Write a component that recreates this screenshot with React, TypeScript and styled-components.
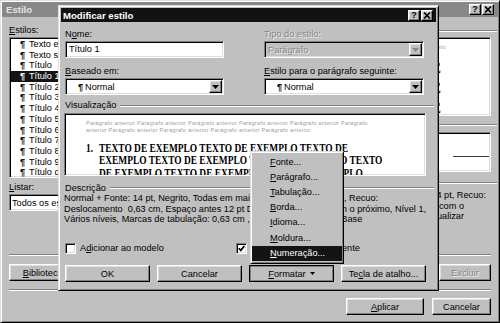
import React from "react";
import styled, { createGlobalStyle, css } from "styled-components";

const FACE = "#c0c0c0";
const SHADOW = "#808080";
const LIGHT = "#dfdfdf";

const GlobalStyle = createGlobalStyle`
  * { box-sizing: border-box; }
  html, body { margin: 0; padding: 0; }
  body {
    width: 500px;
    height: 323px;
    overflow: hidden;
    background: ${FACE};
    font-family: "Liberation Sans", Arial, sans-serif;
    font-size: 9.2px;
    color: #000;
  }
`;

const raised = css`
  border: 1px solid;
  border-color: #fff #000 #000 #fff;
  box-shadow: inset -1px -1px ${SHADOW}, inset 1px 1px ${LIGHT};
`;

const sunken = css`
  border: 1px solid;
  border-color: ${SHADOW} #fff #fff ${SHADOW};
  box-shadow: inset 1px 1px #000, inset -1px -1px ${LIGHT};
`;

const frame = css`
  border: 1px solid;
  border-color: ${LIGHT} #000 #000 ${LIGHT};
  box-shadow: inset 1px 1px #fff, inset -1px -1px ${SHADOW};
`;

const disabledText = css`
  color: #868686;
  text-shadow: 1px 1px #efefef;
`;

/* ---------- window chrome ---------- */

const Window = styled.div`
  position: relative;
  width: 500px;
  height: 323px;
  background: ${FACE};
  ${frame}
  padding: 1px;
  display: flex;
  flex-direction: column;
`;

const TitleBar = styled.div<{ $active?: boolean; $padR: number }>`
  flex: none;
  height: ${(p) => (p.$active ? 14 : 15)}px;
  display: flex;
  align-items: center;
  padding: 0 ${(p) => p.$padR}px 0 ${(p) => (p.$active ? 2 : 4)}px;
  background: ${(p) => (p.$active ? "#121212" : "#888888")};
  color: ${(p) => (p.$active ? "#fff" : "#e4e4e4")};
`;

const TitleText = styled.span`
  flex: 1;
  font-weight: bold;
  font-size: 9.6px;
  white-space: nowrap;
`;

const TitleButtons = styled.div`
  display: flex;
  gap: 1px;
`;

const TitleButton = styled.div`
  ${raised}
  width: 12px;
  height: 11px;
  display: flex;
  align-items: center;
  justify-content: center;
  background: ${FACE};
  color: #000;
  font-weight: bold;
  font-size: 9px;
  line-height: 1;
`;

const Acc = styled.span`
  text-decoration: underline;
  text-underline-offset: 1px;
`;

/* ---------- shared controls ---------- */

const Label = styled.div<{ $disabled?: boolean; $h?: number }>`
  height: ${(p) => p.$h ?? 11}px;
  line-height: ${(p) => p.$h ?? 11}px;
  white-space: nowrap;
  ${(p) => p.$disabled && disabledText}
`;

const TextField = styled.div`
  ${sunken}
  height: 17px;
  margin-top: 1px;
  background: #fff;
  padding-left: 3px;
  line-height: 15px;
  white-space: nowrap;
`;

const Combo = styled.div<{ $disabled?: boolean }>`
  ${sunken}
  height: 17px;
  margin-top: 1px;
  padding: 1px;
  display: flex;
  align-items: center;
  background: ${(p) => (p.$disabled ? FACE : "#fff")};
  overflow: hidden;
`;

const ComboText = styled.span<{ $indent: number; $disabled?: boolean }>`
  flex: 1;
  padding-left: ${(p) => p.$indent}px;
  white-space: nowrap;
  overflow: hidden;
  ${(p) => p.$disabled && disabledText}
`;

const DropButton = styled.div`
  ${raised}
  flex: none;
  width: 13px;
  height: 13px;
  display: flex;
  align-items: center;
  justify-content: center;
  background: ${FACE};
`;

const Pilcrow = styled.span<{ $w: number }>`
  display: inline-block;
  width: ${(p) => p.$w}px;
  font-weight: bold;
`;

const Button = styled.div<{ $w: number; $disabled?: boolean; $pressed?: boolean }>`
  ${(p) =>
    p.$pressed
      ? css`
          border: 1px solid #000;
          box-shadow: inset 1px 1px ${SHADOW}, inset -1px -1px ${SHADOW};
        `
      : raised}
  position: relative;
  flex: none;
  width: ${(p) => p.$w}px;
  height: 17px;
  display: flex;
  align-items: center;
  justify-content: center;
  gap: 4px;
  background: ${FACE};
  white-space: nowrap;
  ${(p) => p.$disabled && disabledText}
`;

const Separator = styled.div`
  flex: none;
  height: 2px;
  border-top: 1px solid ${SHADOW};
  border-bottom: 1px solid #fff;
`;

const GroupHeader = styled.div<{ $h: number; $mt: number }>`
  flex: none;
  display: flex;
  align-items: center;
  height: ${(p) => p.$h}px;
  margin-top: ${(p) => p.$mt}px;
  line-height: ${(p) => p.$h}px;
  white-space: nowrap;
`;

const GroupLine = styled.div<{ $bleed: number }>`
  flex: 1;
  height: 2px;
  margin-left: 4px;
  margin-right: -${(p) => p.$bleed}px;
  border-top: 1px solid ${SHADOW};
  border-bottom: 1px solid #fff;
`;

const Pane = styled.div<{ $h: number; $mt: number }>`
  ${sunken}
  flex: none;
  height: ${(p) => p.$h}px;
  margin-top: ${(p) => p.$mt}px;
  padding: 1px;
  background: #fff;
  overflow: hidden;
`;

/* ---------- background "Estilo" dialog ---------- */

const BgBody = styled.div`
  flex: 1;
  display: flex;
  flex-direction: column;
  padding: 8px 7px 6px 7px;
`;

const TopSection = styled.div`
  flex: none;
  height: 229px;
  display: flex;
`;

const LeftCol = styled.div`
  width: 160px;
  flex: none;
  display: flex;
  flex-direction: column;
`;

const RightCol = styled.div`
  flex: 1;
  min-width: 0;
  margin-left: 12px;
  display: flex;
  flex-direction: column;
`;

const StyleList = styled.div`
  ${sunken}
  height: 141px;
  margin: 1px 0 4px;
  padding: 1px;
  background: #fff;
  overflow: hidden;
`;

const ListItem = styled.div<{ $selected?: boolean }>`
  height: 10.7px;
  line-height: 10.7px;
  padding-left: 9px;
  white-space: nowrap;
  background: ${(p) => (p.$selected ? "#141414" : "transparent")};
  color: ${(p) => (p.$selected ? "#fff" : "#000")};
`;

const TailLine = styled.div<{ $trail: number; $lh: number }>`
  display: flex;
  justify-content: flex-end;
  padding-right: ${(p) => p.$trail}px;
  height: ${(p) => p.$lh}px;
  line-height: ${(p) => p.$lh}px;
  white-space: pre;
  & > span {
    flex: none;
  }
`;

const FaintText = styled.div<{ $mt: number }>`
  margin-top: ${(p) => p.$mt}px;
  font-size: 5.5px;
  letter-spacing: 0.27px;
  color: #a2a2a2;
`;

const BigSerif = styled.div<{ $mt: number; $size: number }>`
  margin-top: ${(p) => p.$mt}px;
  font-family: "Liberation Serif", "Times New Roman", serif;
  font-weight: bold;
  font-size: ${(p) => p.$size}px;
`;

const CharRow = styled.div`
  height: 23px;
  display: flex;
  align-items: flex-end;
  white-space: nowrap;
`;

const CharRule = styled.div<{ $w?: number }>`
  height: 1px;
  background: #3a3a3a;
  flex: ${(p) => (p.$w ? `0 0 ${p.$w}px` : "1")};
`;

const CharSample = styled.span`
  flex: none;
  font-family: "Liberation Serif", "Times New Roman", serif;
  font-weight: bold;
  font-size: 14px;
  line-height: 1;
  padding: 0 24px 0 4px;
`;

const DescBlock = styled.div`
  margin-top: 1px;
  overflow: hidden;
`;

const ButtonRow = styled.div<{ $mt: number; $justify: string; $gap: number }>`
  flex: none;
  display: flex;
  justify-content: ${(p) => p.$justify};
  gap: ${(p) => p.$gap}px;
  margin-top: ${(p) => p.$mt}px;
`;

const ButtonGroup = styled.div`
  display: flex;
  gap: 7px;
`;

/* ---------- modal "Modificar estilo" ---------- */

const Modal = styled.div`
  position: absolute;
  left: 57px;
  top: 4px;
  width: 381px;
  height: 286px;
  background: ${FACE};
  ${frame}
  padding: 2px;
  display: flex;
  flex-direction: column;
  z-index: 1;
`;

const ModalBody = styled.div`
  flex: 1;
  display: flex;
  flex-direction: column;
  padding: 7px 2px 0 4px;
`;

const FieldRow = styled.div<{ $mt: number }>`
  display: flex;
  gap: 40px;
  margin-top: ${(p) => p.$mt}px;
`;

const FieldCell = styled.div<{ $w: number }>`
  width: ${(p) => p.$w}px;
  display: flex;
  flex-direction: column;
`;

const PreviewBox = styled.div`
  ${sunken}
  width: 362px;
  height: 63px;
  margin: 2px 0 0 -1px;
  padding: 1px 1px 1px 21px;
  background: #fff;
  overflow: hidden;
`;

const FaintLine = styled.div<{ $mt?: number }>`
  margin-top: ${(p) => p.$mt ?? 0}px;
  height: 7px;
  line-height: 7px;
  font-size: 5.5px;
  letter-spacing: 0.27px;
  color: #9c9c9c;
  white-space: nowrap;
`;

const SampleBlock = styled.div`
  margin-top: 7.6px;
  transform: scaleX(0.785);
  transform-origin: 0 0;
  display: flex;
  font-family: "Liberation Serif", "Times New Roman", serif;
  font-weight: bold;
  font-size: 12px;
  line-height: 12.8px;
  white-space: nowrap;
`;

const SampleNum = styled.span`
  flex: none;
  width: 16.5px;
`;

const DescLines = styled.div`
  margin-left: -1px;
  line-height: 10.5px;
  white-space: pre;
`;

const CheckRow = styled.div`
  display: flex;
  margin-top: 18.5px;
  height: 11px;
`;

const CheckItem = styled.div<{ $w?: number }>`
  display: flex;
  align-items: center;
  gap: 4px;
  width: ${(p) => (p.$w ? `${p.$w}px` : "auto")};
  white-space: nowrap;
  line-height: 11px;
`;

const CheckBox = styled.div`
  ${sunken}
  flex: none;
  width: 11px;
  height: 11px;
  background: #fff;
  display: flex;
  align-items: center;
  justify-content: center;
`;

const MenuAnchor = styled.div`
  position: relative;
  flex: none;
`;

const Menu = styled.div`
  position: absolute;
  left: 1px;
  bottom: calc(100% + 1px);
  width: 94px;
  background: ${FACE};
  ${frame}
  padding: 2.5px 1px 2px;
  z-index: 2;
`;

const MenuItem = styled.div<{ $active?: boolean }>`
  height: 15.2px;
  line-height: 15.2px;
  padding-left: 18px;
  white-space: nowrap;
  background: ${(p) => (p.$active ? "#141414" : "transparent")};
  color: ${(p) => (p.$active ? "#fff" : "#000")};
`;

/* ---------- icons ---------- */

const CloseGlyph = () => (
  <svg width="8" height="7" viewBox="0 0 8 7">
    <path d="M1 0.5 L7 6.5 M7 0.5 L1 6.5" stroke="#000" strokeWidth="1.6" />
  </svg>
);

const DownArrow = ({ color = "#000" }: { color?: string }) => (
  <svg width="7" height="4" viewBox="0 0 7 4">
    <polygon points="0,0 7,0 3.5,4" fill={color} />
  </svg>
);

const SmallArrow = () => (
  <svg width="5" height="3" viewBox="0 0 5 3">
    <polygon points="0,0 5,0 2.5,3" fill="#000" />
  </svg>
);

const CheckMark = () => (
  <svg width="7" height="7" viewBox="0 0 7 7">
    <polyline points="0.8,3.2 2.8,5.4 6.3,1" fill="none" stroke="#000" strokeWidth="1.7" />
  </svg>
);

const TitleControls = () => (
  <TitleButtons>
    <TitleButton>?</TitleButton>
    <TitleButton>
      <CloseGlyph />
    </TitleButton>
  </TitleButtons>
);

/* ---------- data ---------- */

const styles = [
  "Texto explicativo",
  "Texto sem formatação",
  "Título",
  "Título 1",
  "Título 2",
  "Título 3",
  "Título 4",
  "Título 5",
  "Título 6",
  "Título 7",
  "Título 8",
  "Título 9",
  "Título de índice",
];

const menuItems: [string, string][] = [
  ["F", "onte..."],
  ["P", "arágrafo..."],
  ["T", "abulação..."],
  ["B", "orda..."],
  ["I", "dioma..."],
  ["M", "oldura..."],
  ["N", "umeração..."],
];

const P = "Parágrafo";
const A = "anterior";

export default function App() {
  return (
    <>
      <GlobalStyle />
      <Window>
        <TitleBar $padR={4}>
          <TitleText>Estilo</TitleText>
          <TitleControls />
        </TitleBar>
        <BgBody>
          <TopSection>
            <LeftCol>
              <Label>
                <Acc>E</Acc>stilos:
              </Label>
              <StyleList>
                {styles.map((s) => (
                  <ListItem key={s} $selected={s === "Título 1"}>
                    <Pilcrow $w={9}>¶</Pilcrow>
                    {s}
                  </ListItem>
                ))}
              </StyleList>
              <Label>
                <Acc>L</Acc>istar:
              </Label>
              <Combo>
                <ComboText $indent={1}>Todos os estilos</ComboText>
                <DropButton>
                  <DownArrow />
                </DropButton>
              </Combo>
            </LeftCol>
            <RightCol>
              <GroupHeader $h={12} $mt={0}>
                Visualização do parágrafo
                <GroupLine $bleed={6} />
              </GroupHeader>
              <Pane $h={79} $mt={0}>
                <FaintText $mt={4.5}>
                  <TailLine $trail={43} $lh={7}>
                    <span>{`${P} ${A} ${P} ${A} ${P}`}</span>
                  </TailLine>
                </FaintText>
                <BigSerif $mt={7.5} $size={15}>
                  <TailLine $trail={48} $lh={20}>
                    <span>TEXTO DE EXEMPLO TEXTO DE</span>
                  </TailLine>
                  <TailLine $trail={48} $lh={20}>
                    <span>EXEMPLO TEXTO DE</span>
                  </TailLine>
                  <TailLine $trail={48} $lh={20}>
                    <span>TEXTO DE EXEMPLO DE</span>
                  </TailLine>
                </BigSerif>
              </Pane>
              <GroupHeader $h={12} $mt={3}>
                Visualização dos caracteres
                <GroupLine $bleed={6} />
              </GroupHeader>
              <Pane $h={40} $mt={1}>
                <CharRow>
                  <CharRule />
                  <CharSample>Times New Roman</CharSample>
                  <CharRule $w={36} />
                </CharRow>
              </Pane>
              <GroupHeader $h={12} $mt={5}>
                Descrição
                <GroupLine $bleed={6} />
              </GroupHeader>
              <DescBlock>
                <TailLine $trail={5} $lh={10.5}>
                  <span>Normal + Fonte: 14 pt, Negrito, Todas em maiúsculas, Kern em 14 pt, Recuo:</span>
                </TailLine>
                <TailLine $trail={27} $lh={10.5}>
                  <span>Espaço antes 12 pt Depois 3 pt, Manter com o</span>
                </TailLine>
                <TailLine $trail={27} $lh={10.5}>
                  <span>Marcas de tabulação: 0,63 cm , Atualizar</span>
                </TailLine>
              </DescBlock>
            </RightCol>
          </TopSection>
          <Separator />
          <ButtonRow $mt={8} $justify="space-between" $gap={0}>
            <Button $w={75}>
              <span>
                <Acc>B</Acc>iblioteca...
              </span>
            </Button>
            <ButtonGroup>
              <Button $w={52}>
                <span>
                  <Acc>N</Acc>ovo...
                </span>
              </Button>
              <Button $w={52}>
                <span>
                  <Acc>M</Acc>odificar...
                </span>
              </Button>
              <Button $w={52} $disabled>
                Excluir
              </Button>
            </ButtonGroup>
          </ButtonRow>
          <ButtonRow $mt={8} $justify="flex-end" $gap={0}>
            <Separator style={{ flex: 1 }} />
          </ButtonRow>
          <ButtonRow $mt={7} $justify="flex-end" $gap={8}>
            <Button $w={78}>
              <span>
                <Acc>A</Acc>plicar
              </span>
            </Button>
            <Button $w={59}>Cancelar</Button>
          </ButtonRow>
        </BgBody>

        <Modal>
          <TitleBar $active $padR={3}>
            <TitleText>Modificar estilo</TitleText>
            <TitleControls />
          </TitleBar>
          <ModalBody>
            <FieldRow $mt={0}>
              <FieldCell $w={159}>
                <Label>
                  N<Acc>o</Acc>me:
                </Label>
                <TextField>Título 1</TextField>
              </FieldCell>
              <FieldCell $w={160}>
                <Label $disabled>Tipo do estilo:</Label>
                <Combo $disabled>
                  <ComboText $indent={2} $disabled>
                    Parágrafo
                  </ComboText>
                  <DropButton>
                    <DownArrow color="#8a8a8a" />
                  </DropButton>
                </Combo>
              </FieldCell>
            </FieldRow>
            <FieldRow $mt={8}>
              <FieldCell $w={159}>
                <Label>
                  <Acc>B</Acc>aseado em:
                </Label>
                <Combo>
                  <ComboText $indent={11}>
                    <Pilcrow $w={7}>¶</Pilcrow>Normal
                  </ComboText>
                  <DropButton>
                    <DownArrow />
                  </DropButton>
                </Combo>
              </FieldCell>
              <FieldCell $w={160}>
                <Label>
                  <Acc>E</Acc>stilo para o parágrafo seguinte:
                </Label>
                <Combo>
                  <ComboText $indent={11}>
                    <Pilcrow $w={7}>¶</Pilcrow>Normal
                  </ComboText>
                  <DropButton>
                    <DownArrow />
                  </DropButton>
                </Combo>
              </FieldCell>
            </FieldRow>

            <GroupHeader $h={11} $mt={5}>
              Visualização
              <GroupLine $bleed={0} />
            </GroupHeader>
            <PreviewBox>
              <FaintLine $mt={5}>{`${P} ${A} ${P} ${A} ${P} ${A} ${P} ${A} ${P} ${A} ${P}`}</FaintLine>
              <FaintLine>{`${A} ${P} ${A} ${P} ${A} ${P} ${A} ${P} ${A}`}</FaintLine>
              <SampleBlock>
                <SampleNum>1.</SampleNum>
                <div>
                  <div>TEXTO DE EXEMPLO TEXTO DE EXEMPLO TEXTO DE</div>
                  <div>EXEMPLO TEXTO DE EXEMPLO TEXTO DE EXEMPLO TEXTO</div>
                  <div>DE EXEMPLO TEXTO DE EXEMPLO TEXTO DE EXEMPLO</div>
                </div>
              </SampleBlock>
            </PreviewBox>

            <GroupHeader $h={10} $mt={7}>
              Descrição
              <GroupLine $bleed={0} />
            </GroupHeader>
            <DescLines>
              <div>Normal + Fonte: 14 pt, Negrito, Todas em maiúsculas, Kern em 16 pt, Recuo:</div>
              <div>Deslocamento  0,63 cm, Espaço antes 12 pt Depois 3 pt, Manter com o próximo, Nível 1,</div>
              <div>Vários níveis, Marcas de tabulação: 0,63 cm , Alinhado à esquerda, Base</div>
            </DescLines>

            <CheckRow>
              <CheckItem $w={171}>
                <CheckBox />
                <span>
                  A<Acc>d</Acc>icionar ao modelo
                </span>
              </CheckItem>
              <CheckItem>
                <CheckBox>
                  <CheckMark />
                </CheckBox>
                <span>
                  A<Acc>t</Acc>ualizar automaticamente
                </span>
              </CheckItem>
            </CheckRow>

            <ButtonRow $mt={11} $justify="flex-start" $gap={7}>
              <Button $w={85}>OK</Button>
              <Button $w={85}>Cancelar</Button>
              <MenuAnchor>
                <Menu>
                  {menuItems.map(([k, rest]) => (
                    <MenuItem key={k} $active={k === "N"}>
                      <Acc>{k}</Acc>
                      {rest}
                    </MenuItem>
                  ))}
                </Menu>
                <Button $w={85} $pressed>
                  <span>
                    <Acc>F</Acc>ormatar
                  </span>
                  <SmallArrow />
                </Button>
              </MenuAnchor>
              <Button $w={85}>
                <span>
                  Te<Acc>c</Acc>la de atalho...
                </span>
              </Button>
            </ButtonRow>
          </ModalBody>
        </Modal>
      </Window>
    </>
  );
}
